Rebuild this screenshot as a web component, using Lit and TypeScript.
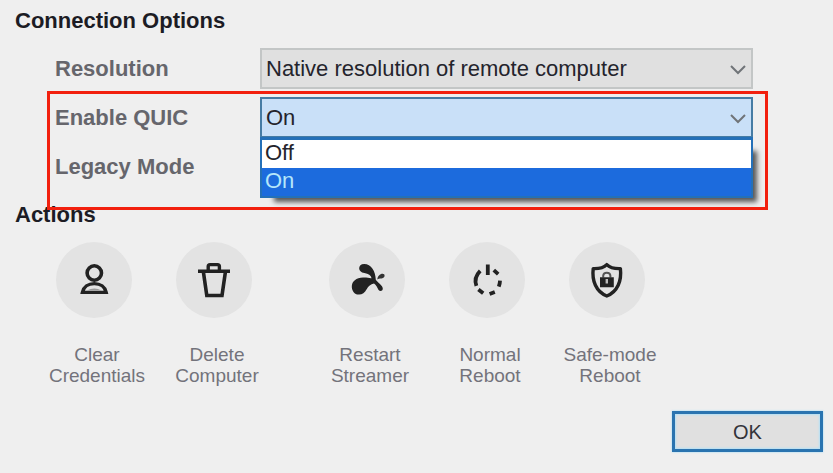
import { LitElement, html, css, svg } from "lit";
import { customElement, state } from "lit/decorators.js";

const icons = {
  person: svg`
    <circle cx="38.3" cy="31" r="7.2" fill="none" stroke="#222" stroke-width="3.6"/>
    <path d="M26.4 50.4H50.2C49 45 44.4 41.6 38.3 41.6S27.6 45 26.4 50.4Z" fill="none" stroke="#222" stroke-width="3.4"/>
    <path d="M31 48.6Q38.3 44.6 45.6 48.6Z" fill="#999"/>`,
  trash: svg`
    <path d="M22 29.2H54" fill="none" stroke="#222" stroke-width="3.4"/>
    <path d="M32.2 29V24.5Q32.2 22.6 34 22.6H41.5Q43.4 22.6 43.4 24.5V29" fill="none" stroke="#222" stroke-width="3.4"/>
    <path d="M27.4 30L30.8 53.5H46L49.4 30" fill="none" stroke="#222" stroke-width="3.6"/>`,
  streamer: svg`
    <path d="M22.8 45C22.6 39.4 27.4 35.8 34 35.6C38 35.4 41 36.6 42.6 36.2C42 33.4 39.4 31.6 35.4 31C28.6 30.4 28.4 22 35.2 22C42.2 22 46.6 29.4 46.8 37.8C48.4 40.6 54 43.4 53.8 46.8C53.6 49.4 50.8 49.8 49.4 47.8C48.2 45.4 47.2 42.6 45 41.4C41.6 42 39.4 44 37.8 47C35.6 51.2 33 52.8 29.6 52.6C25.4 52.4 23 49 22.8 45Z" fill="#222"/>
    <path d="M48.4 37.4C48.4 34.4 51 31.8 53.6 31.8C56.2 31.8 56.2 35.2 54 36C52 36.8 50.2 36.4 48.4 37.4Z" fill="#333"/>`,
  power: svg`
    <path d="M38.8 22.4V33" fill="none" stroke="#222" stroke-width="3.8"/>
    <path d="M31.2 28.8Q24.4 35.6 27.4 43.8M44.8 28.2L49.2 32.2M51 38.6Q50.9 41.8 49.8 44.6M29.4 47.4L34.2 51.2M40.6 52L45.8 50" fill="none" stroke="#222" stroke-width="3.8"/>`,
  shield: svg`
    <path d="M37.8 22.6C34.4 26 29.8 26.8 24.2 26.6C22.8 38.8 27 49.8 37.8 54C48.6 49.8 52.8 38.8 51.4 26.6C45.8 26.8 41.2 26 37.8 22.6Z" fill="none" stroke="#222" stroke-width="3.4" stroke-linejoin="round"/>
    <path d="M34.2 35.4V33.8Q34.4 30.8 37.8 30.8T41.4 33.8V35.4" fill="none" stroke="#555" stroke-width="2"/>
    <path d="M31 35.2H44.8V45.2H31Z" fill="#222"/>
    <path d="M37.8 37V41.4" fill="none" stroke="#bbb" stroke-width="2.4"/>`,
};

type IconName = keyof typeof icons;

const actionGroups: { icon: IconName; lines: [string, string] }[][] = [
  [
    { icon: "person", lines: ["Clear", "Credentials"] },
    { icon: "trash", lines: ["Delete", "Computer"] },
  ],
  [
    { icon: "streamer", lines: ["Restart", "Streamer"] },
    { icon: "power", lines: ["Normal", "Reboot"] },
    { icon: "shield", lines: ["Safe-mode", "Reboot"] },
  ],
];

@customElement("app-root")
export class AppRoot extends LitElement {
  @state() private quic = "On";

  static styles = css`
    :host {
      display: block;
      box-sizing: border-box;
      min-height: 100vh;
      padding: 7px 10px 20px 15px;
      background: #efefef;
      color: #1c1c24;
      font-family: "Liberation Sans", Arial, sans-serif;
      font-size: 22px;
      line-height: 28px;
    }
    .heading {
      margin: 0;
      font-size: 22px;
      font-weight: bold;
    }
    .options {
      display: grid;
      gap: 8px;
      margin: 13px 70px 14px 40px;
    }
    .row {
      display: grid;
      grid-template-columns: 205px 1fr;
      align-items: center;
    }
    .label {
      color: #66666c;
      font-weight: bold;
    }
    .field {
      position: relative;
      display: grid;
    }
    .combo {
      appearance: none;
      box-sizing: border-box;
      width: 100%;
      height: 41px;
      margin: 0;
      padding: 0 36px 0 4px;
      border: 2px solid #c3c6c6;
      border-radius: 0;
      background: #e0e0e0;
      color: #24242c;
      font: inherit;
    }
    .combo.active {
      border-color: #467ca4;
      background: #c9e0f8;
    }
    .chevron {
      position: absolute;
      right: 7px;
      top: 16px;
      width: 16px;
      height: 11px;
      pointer-events: none;
    }
    .popup {
      position: absolute;
      z-index: 1;
      top: 40px;
      left: 0;
      appearance: none;
      box-sizing: border-box;
      width: 100%;
      height: 61px;
      margin: 0;
      padding: 0;
      overflow: hidden;
      border: 2px solid #2470b8;
      border-top-width: 3px;
      border-radius: 0;
      outline: none;
      background: #fff;
      box-shadow: 9px 9px 5px -5px #555;
      font: inherit;
    }
    .choice {
      box-sizing: border-box;
      height: 28px;
      min-height: 28px;
      padding: 0 3px;
      color: #24242c;
      font: inherit;
      line-height: 28px;
    }
    .choice:checked {
      background: #1c6bdd linear-gradient(#1c6bdd, #1c6bdd);
      color: #b5e6fa;
    }
    .marked {
      position: relative;
      display: grid;
      gap: 8px;
    }
    .marked::after {
      content: "";
      position: absolute;
      z-index: 2;
      inset: -6px -15px -23px -8px;
      border: 3px solid #f2200e;
      pointer-events: none;
    }
    .actions {
      display: flex;
      gap: 33px;
      margin: 13px 0 25px 19px;
    }
    .group {
      display: flex;
    }
    .action {
      display: flex;
      flex-direction: column;
      align-items: center;
      gap: 26px;
      width: 120px;
      padding: 0;
      border: 0;
      background: none;
      color: #73737b;
      font: inherit;
      font-size: 19px;
      line-height: 21px;
    }
    .disc {
      width: 76px;
      height: 76px;
      border-radius: 50%;
      background: #e3e3e3;
    }
    .caption {
      padding-left: 6px;
      white-space: nowrap;
    }
    .footer {
      display: flex;
      justify-content: flex-end;
    }
    .ok {
      box-sizing: border-box;
      width: 151px;
      height: 41px;
      padding: 0;
      border: 3px solid #2a74b0;
      box-shadow: 0 0 2px #9ad8f8, inset 0 0 2px 1px #b4e0f6;
      background: #e0e0e0;
      color: #33333a;
      font: inherit;
      font-size: 20px;
    }
  `;

  private chevron() {
    return html`<svg class="chevron" viewBox="0 0 16 11" aria-hidden="true">
      <path d="M1 2L8 9L15 2" fill="none" stroke="#707478" stroke-width="2"/>
    </svg>`;
  }

  render() {
    return html`
      <h2 class="heading">Connection Options</h2>
      <div class="options">
        <div class="row">
          <label class="label" for="resolution">Resolution</label>
          <div class="field">
            <select class="combo" id="resolution">
              <option>Native resolution of remote computer</option>
            </select>
            ${this.chevron()}
          </div>
        </div>
        <div class="marked">
          <div class="row">
            <label class="label" for="quic">Enable QUIC</label>
            <div class="field">
              <select
                class="combo active"
                id="quic"
                @change=${(e: Event) => (this.quic = (e.target as HTMLSelectElement).value)}
              >
                <option .selected=${this.quic === "Off"}>Off</option>
                <option .selected=${this.quic === "On"}>On</option>
              </select>
              ${this.chevron()}
              <select
                class="popup"
                size="2"
                aria-label="Enable QUIC choices"
                @change=${(e: Event) => (this.quic = (e.target as HTMLSelectElement).value)}
              >
                <option class="choice" .selected=${this.quic === "Off"}>Off</option>
                <option class="choice" .selected=${this.quic === "On"}>On</option>
              </select>
            </div>
          </div>
          <div class="row">
            <label class="label" for="legacy">Legacy Mode</label>
            <div class="field">
              <select class="combo" id="legacy"></select>
            </div>
          </div>
        </div>
      </div>
      <h2 class="heading">Actions</h2>
      <div class="actions">
        ${actionGroups.map(
          (group) => html`<div class="group">
            ${group.map(
              (a) => html`<button class="action" type="button">
                <svg class="disc" viewBox="0 0 76 76" aria-hidden="true">${icons[a.icon]}</svg>
                <span class="caption">${a.lines[0]}<br />${a.lines[1]}</span>
              </button>`
            )}
          </div>`
        )}
      </div>
      <div class="footer">
        <button class="ok" type="button">OK</button>
      </div>
    `;
  }
}
